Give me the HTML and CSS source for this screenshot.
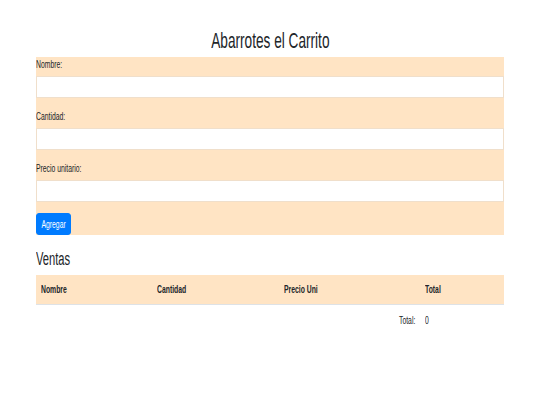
FILE: index.html
```html
<!DOCTYPE html>
<html lang="es">

<head>
    <meta charset="UTF-8">
    <meta name="viewport" content="width=device-width, initial-scale=1.0">
    <title>Abarrotes el Carrito</title>
    <link rel="stylesheet" href="styles.css">
</head>

<body>
    <div class="container">
        <h1 class="title"><span class="sx sx-c">Abarrotes el Carrito</span></h1>

        <form class="form">
            <div class="group">
                <label class="label"><span class="sx">Nombre:</span></label>
                <input class="input" type="text">
            </div>
            <div class="group">
                <label class="label"><span class="sx">Cantidad:</span></label>
                <input class="input" type="text">
            </div>
            <div class="group">
                <label class="label"><span class="sx">Precio unitario:</span></label>
                <input class="input" type="text">
            </div>
            <button class="btn" type="button"><span class="sx sx-c">Agregar</span></button>
        </form>

        <h2 class="subtitle"><span class="sx">Ventas</span></h2>

        <table class="table">
            <thead>
                <tr>
                    <th class="c1"><span class="sx">Nombre</span></th>
                    <th class="c2"><span class="sx">Cantidad</span></th>
                    <th class="c3"><span class="sx">Precio Uni</span></th>
                    <th class="c4"><span class="sx">Total</span></th>
                </tr>
            </thead>
            <tbody>
                <tr class="total-row">
                    <td colspan="3" class="right"><span class="sx sx-r">Total:</span></td>
                    <td><span class="sx">0</span></td>
                </tr>
            </tbody>
        </table>
    </div>
</body>

</html>
```

FILE: styles.css
```css
* {
    margin: 0;
    padding: 0;
    box-sizing: border-box;
}

body {
    font-family: "Liberation Sans", Arial, sans-serif;
    color: #212529;
    background: #fff;
}

/* the text in the shot is narrow */
.sx {
    display: inline-block;
    transform: scaleX(.62);
    transform-origin: left center;
    white-space: nowrap;
}

.sx-c {
    transform-origin: center center;
}

.sx-r {
    transform-origin: right center;
}

.container {
    width: 468px;
    margin: 0 auto;
}

.title {
    font-size: 22px;
    font-weight: normal;
    line-height: 26px;
    text-align: center;
    margin: 28px 0 3px;
}

.form {
    background: bisque;
}

.group {
    margin-bottom: 11px;
}

.label {
    display: block;
    font-size: 11px;
    line-height: 14px;
    margin-bottom: 5px;
}

.input {
    display: block;
    width: 100%;
    height: 22px;
    background: #fff;
    border: 1px solid #f0dfcb;
    outline: none;
}

.btn {
    display: flex;
    justify-content: center;
    align-items: center;
    width: 35px;
    height: 22px;
    background: #007bff;
    border: 1px solid #007bff;
    border-radius: 3px;
    color: #fff;
    font-family: inherit;
    font-size: 11px;
    line-height: 14px;
}

.subtitle {
    font-size: 18px;
    font-weight: normal;
    line-height: 22px;
    margin: 13px 0 5px;
}

.table {
    width: 100%;
    border-collapse: collapse;
    font-size: 11px;
    color: #212529;
}

.table thead {
    background: bisque;
}

.table th {
    height: 29px;
    text-align: left;
    font-weight: bold;
    padding: 0 5px;
    border-bottom: 1px solid #dee2e6;
    vertical-align: middle;
}

.c1 { width: 116px; }
.c2 { width: 127px; }
.c3 { width: 141px; }
.c4 { width: 84px; }

.table td {
    padding: 8px 5px;
    line-height: 14px;
}

.right {
    text-align: right;
}
```
